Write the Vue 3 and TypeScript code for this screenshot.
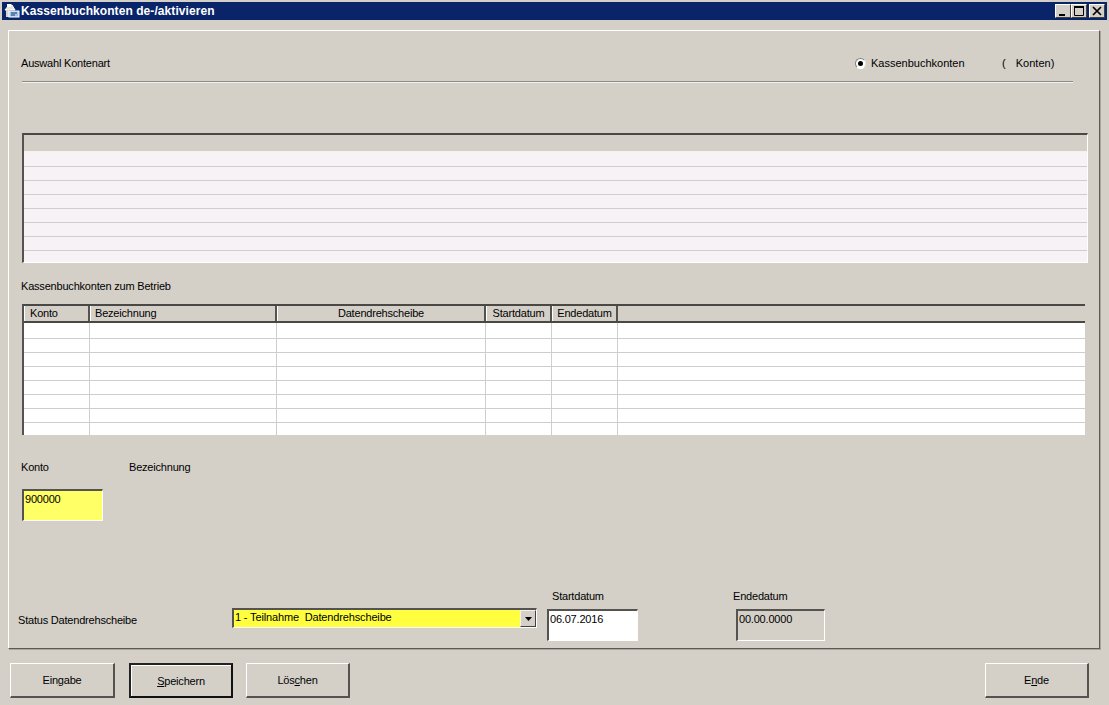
<script setup lang="ts">
interface Column {
  label: string
  width: number
  align?: 'center'
}

const upperRows = Array.from({ length: 8 })
const lowerRows = Array.from({ length: 8 })

const columns: Column[] = [
  { label: 'Konto', width: 66 },
  { label: 'Bezeichnung', width: 187 },
  { label: 'Datendrehscheibe', width: 209, align: 'center' },
  { label: 'Startdatum', width: 66, align: 'center' },
  { label: 'Endedatum', width: 66, align: 'center' },
]
</script>

<template>
  <div class="window">
    <header class="titlebar">
      <svg class="app-icon" width="16" height="16" viewBox="0 0 16 16">
        <path d="M1 7 5 2h3l3 5z" fill="#e8e4dc" stroke="#fff" stroke-width="1" />
        <rect x="3" y="1" width="4" height="3" fill="#fff" />
        <rect x="2" y="7" width="3" height="7" fill="#d8d4cc" />
        <rect x="5" y="8" width="10" height="6" fill="#9cc4e8" stroke="#fff" stroke-width="1" />
        <path d="M7 10h6M7 12h4" stroke="#24406c" stroke-width="1" />
      </svg>
      <span class="title">Kassenbuchkonten de-/aktivieren</span>
      <div class="caption-buttons">
        <button class="caption-btn" aria-label="Minimieren">
          <svg width="14" height="12" viewBox="0 0 14 12"><rect x="3" y="9" width="6" height="2" fill="#000" /></svg>
        </button>
        <button class="caption-btn" aria-label="Maximieren">
          <svg width="14" height="12" viewBox="0 0 14 12"><path d="M2.500 2.500h9v8h-9z" fill="none" stroke="#000" /><rect x="2" y="1" width="10" height="2" fill="#000" /></svg>
        </button>
        <button class="caption-btn caption-btn--close" aria-label="Schließen">
          <svg width="14" height="12" viewBox="0 0 14 12"><path d="M3 2l8 8M11 2l-8 8" stroke="#000" stroke-width="1.7" fill="none" /></svg>
        </button>
      </div>
    </header>

    <main class="panel">
      <div class="type-row">
        <span class="type-label">Auswahl Kontenart</span>
        <span class="radio"><span class="radio__dot" /></span>
        <span class="radio-label">Kassenbuchkonten</span>
        <span class="count-label">( &nbsp;Konten)</span>
      </div>
      <div class="separator" />

      <section class="grid grid--upper">
        <div class="grid__head" />
        <div v-for="(_, idx) in upperRows" :key="idx" class="grid__row" :class="{ 'grid__row--first': idx === 0 }" />
      </section>

      <p class="section-label">Kassenbuchkonten zum Betrieb</p>

      <section class="grid grid--lower">
        <div class="grid__head grid__head--cols">
          <div
            v-for="col in columns"
            :key="col.label"
            class="head-cell"
            :class="{ 'head-cell--center': col.align === 'center' }"
            :style="{ width: `${col.width}px` }"
          >
            {{ col.label }}
          </div>
        </div>
        <div
          v-for="(_, idx) in lowerRows"
          :key="idx"
          class="grid__row grid__row--cols"
          :class="{ 'grid__row--first-lower': idx === 0 }"
        >
          <div v-for="col in columns" :key="col.label" class="cell" :style="{ width: `${col.width}px` }" />
        </div>
      </section>

      <div class="field-labels">
        <span class="field-labels__konto">Konto</span>
        <span>Bezeichnung</span>
      </div>
      <div class="input input--konto">900000</div>

      <div class="status-row">
        <span class="status-label">Status Datendrehscheibe</span>
        <div class="combo">
          <span class="combo__value">1 - Teilnahme &nbsp;Datendrehscheibe</span>
          <span class="combo__btn">
            <svg width="7" height="4" viewBox="0 0 7 4"><path d="M0 0h7L3.500 4z" fill="#000" /></svg>
          </span>
        </div>
        <div class="date-field date-field--start">
          <label class="date-field__label">Startdatum</label>
          <div class="input input--date">06.07.2016</div>
        </div>
        <div class="date-field date-field--end">
          <label class="date-field__label">Endedatum</label>
          <div class="input input--date input--disabled">00.00.0000</div>
        </div>
      </div>
    </main>

    <footer class="actions">
      <button class="btn btn--first">Ein<u>g</u>abe</button>
      <button class="btn btn--default"><u>S</u>peichern</button>
      <button class="btn">Lös<u>c</u>hen</button>
      <button class="btn btn--end">E<u>n</u>de</button>
    </footer>
  </div>
</template>

<style>
html,
body {
  margin: 0;
  background: #d4d0c8;
}
</style>

<style scoped>
.window {
  width: 1109px;
  height: 705px;
  overflow: hidden;
  box-sizing: border-box;
  padding-top: 2px;
  background: #d4d0c8;
  color: #000;
  font-family: "Liberation Sans", Arial, sans-serif;
  font-size: 11px;
  letter-spacing: -0.2px;
}

/* Title bar */
.titlebar {
  display: flex;
  align-items: center;
  height: 18px;
  margin: 0 2px;
  background: #0a246a;
  color: #fff;
}

.app-icon {
  margin-left: 2px;
  flex: none;
}

.title {
  margin-left: 1px;
  font-size: 12px;
  font-weight: 700;
  letter-spacing: 0.07px;
}

.caption-buttons {
  display: flex;
  margin-left: auto;
  margin-right: 2px;
}

.caption-btn {
  display: flex;
  align-items: center;
  justify-content: center;
  width: 16px;
  height: 14px;
  padding: 0;
  border: 1px solid;
  border-color: #fff #404040 #404040 #fff;
  background: #d4d0c8;
}

.caption-btn--close {
  margin-left: 2px;
}

/* Main panel */
.panel {
  box-sizing: border-box;
  width: 1092px;
  height: 619px;
  margin: 10px 0 0 8px;
  padding-left: 13px;
  border: 1px solid;
  border-color: #fff #5c5a56 #5c5a56 #fff;
  box-shadow: 1px 1px 0 #a8a59e;
}

.type-row {
  display: flex;
  align-items: center;
  height: 16px;
  margin-top: 24px;
}

.type-label {
  width: 834px;
  margin-left: -1px;
}

.radio {
  display: flex;
  align-items: center;
  justify-content: center;
  box-sizing: border-box;
  width: 11px;
  height: 11px;
  border-radius: 50%;
  border: 1px solid;
  border-color: #808080 #e8e8e8 #fff #808080;
  background: #fff;
}

.radio__dot {
  width: 5px;
  height: 5px;
  border-radius: 50%;
  background: #000;
}

.radio-label {
  width: 131px;
  margin-left: 5px;
  letter-spacing: 0;
}

.count-label {
  letter-spacing: 0;
  word-spacing: 2px;
}

.separator {
  width: 1051px;
  height: 1px;
  margin-top: 10px;
  background: #8d8b86;
  box-shadow: 0 1px 0 #f2f0ec;
}

/* Grids */
.grid {
  box-sizing: border-box;
  overflow: hidden;
  border: 1px solid;
  border-top: 2px solid #4a4844;
  border-left: 2px solid #55534f;
  border-right-color: #fff;
  border-bottom-color: #fff;
}

.grid--upper {
  width: 1066px;
  height: 130px;
  margin-top: 51px;
  background: #f6f2f6;
}

.grid--lower {
  width: 1063px;
  height: 131px;
  margin-top: 11px;
  background: #fff;
  border-right: 0;
  border-bottom: 0;
}

.grid__head {
  box-sizing: border-box;
  height: 17px;
  background: #d4d0c8;
  border-bottom: 1px solid #f4f2ee;
}

.grid__head--cols {
  display: flex;
  height: 17px;
  border-bottom: 2px solid #4a4844;
}

.head-cell {
  box-sizing: border-box;
  flex: none;
  height: 15px;
  padding-left: 4px;
  line-height: 15px;
  border-left: 1px solid #fff;
  border-right: 2px solid #55534f;
}

.head-cell:first-child {
  padding-left: 5px;
}

.head-cell--center {
  padding-left: 0;
  text-align: center;
}

.grid__row {
  box-sizing: border-box;
  height: 14px;
  border-bottom: 1px solid #cfcdd0;
}

.grid__row--first {
  height: 15px;
}

.grid__row--first-lower {
  height: 16px;
}

.grid__row--cols {
  display: flex;
}

.cell {
  box-sizing: border-box;
  flex: none;
  border-right: 1px solid #cfcfcf;
}

.section-label {
  height: 14px;
  margin: 16px 0 0 -1px;
  line-height: 14px;
}

/* Inputs */
.field-labels {
  display: flex;
  height: 14px;
  margin: 25px 0 0 -1px;
  line-height: 14px;
}

.field-labels__konto {
  width: 108px;
}

.input {
  box-sizing: border-box;
  padding: 1px 0 0 1px;
  line-height: 14px;
  border: 1px solid;
  border-color: #55534f #fff #fff #55534f;
  border-top-width: 2px;
  border-left-width: 2px;
}

.input--konto {
  width: 81px;
  height: 32px;
  margin-top: 15px;
  background: #ffff66;
}

.status-row {
  display: flex;
  align-items: flex-start;
  margin: 68px 0 0 -4px;
}

.status-label {
  width: 214px;
  margin-top: 24px;
  height: 14px;
  line-height: 14px;
}

.combo {
  display: flex;
  box-sizing: border-box;
  width: 305px;
  height: 20px;
  margin-top: 19px;
  border: 1px solid;
  border-top: 2px solid #55534f;
  border-left: 2px solid #55534f;
  border-right-color: #fff;
  border-bottom-color: #fff;
  background: #ffff40;
}

.combo__value {
  flex: 1;
  padding-left: 1px;
  line-height: 15px;
  letter-spacing: -0.15px;
}

.combo__btn {
  display: flex;
  align-items: center;
  justify-content: center;
  box-sizing: border-box;
  width: 16px;
  height: 17px;
  border: 1px solid;
  border-color: #f4f2ee #404040 #404040 #f4f2ee;
  background: #d4d0c8;
}

.date-field {
  display: flex;
  flex-direction: column;
}

.date-field--start {
  margin-left: 10px;
  width: 91px;
}

.date-field--end {
  margin-left: 98px;
  width: 89px;
}

.date-field__label {
  height: 14px;
  margin-bottom: 6px;
  line-height: 14px;
}

.date-field--start .date-field__label {
  margin-left: 5px;
}

.date-field--end .date-field__label {
  margin-left: -3px;
}

.input--date {
  height: 32px;
  margin-top: 0;
  background: #fff;
}

.input--disabled {
  background: #d4d0c8;
}

/* Buttons */
.actions {
  display: flex;
  gap: 13px;
  margin: 14px 20px 0 10px;
}

.btn {
  box-sizing: border-box;
  width: 104px;
  height: 35px;
  padding: 0;
  font: inherit;
  letter-spacing: inherit;
  color: #000;
  background: #d4d0c8;
  border: 1px solid;
  border-color: #fff #55534f #55534f #fff;
  border-right-width: 2px;
  border-bottom-width: 2px;
}

.btn--first {
  width: 105px;
  margin-right: 1px;
}

.btn--default {
  border: 2px solid #111;
  border-color: #222 #111 #111 #222;
  box-shadow: inset 1px 1px 0 #fff;
}

.btn--end {
  margin-left: auto;
}
</style>
